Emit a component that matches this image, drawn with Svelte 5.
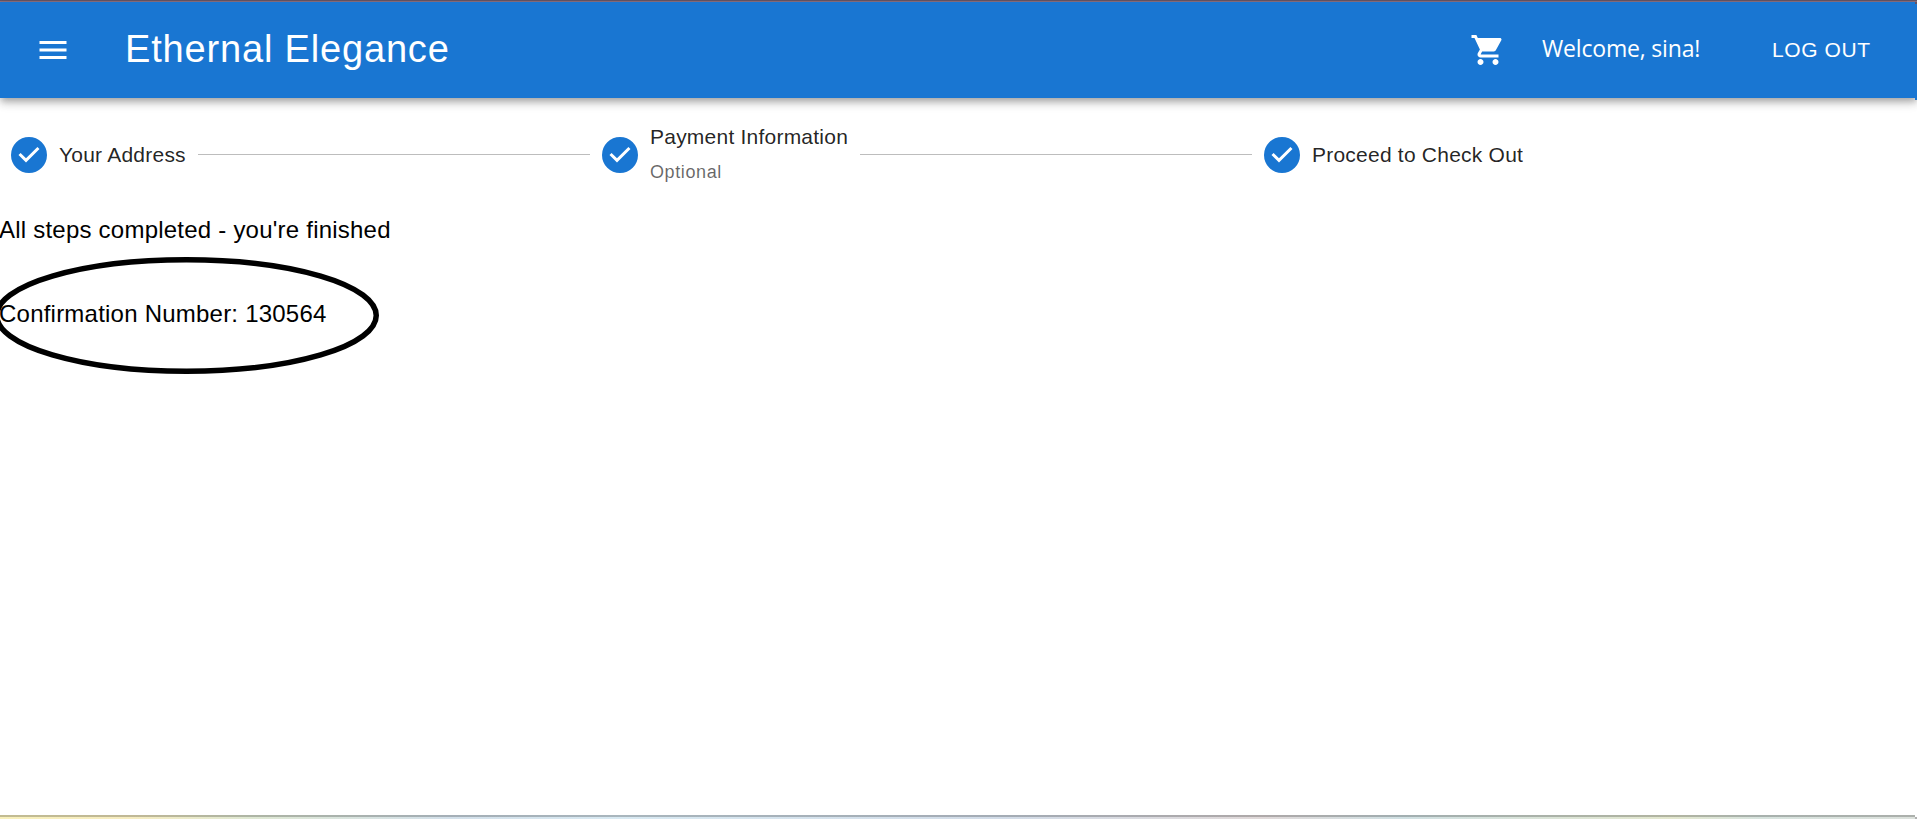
<script>
  const steps = [
    { label: 'Your Address', width: 127 },
    { label: 'Payment Information', optional: 'Optional', width: 198 },
    { label: 'Proceed to Check Out', width: 212 }
  ];
</script>

<div class="page">
  <div class="window-edge"></div>
  <header>
    <svg class="menu" viewBox="0 0 24 24"><path d="M3 18h18v-2H3v2zm0-5h18v-2H3v2zm0-7v2h18V6H3z" /></svg>
    <h1>Ethernal Elegance</h1>
    <svg class="cart" viewBox="0 0 24 24"><path d="M7 18c-1.1 0-1.99.9-1.99 2S5.900 22 7 22s2-.9 2-2-.9-2-2-2zM1 2v2h2l3.600 7.590-1.350 2.450c-.16.28-.25.61-.25.960 0 1.100.9 2 2 2h12v-2H7.420c-.14 0-.25-.11-.25-.25l.03-.12.9-1.630h7.450c.75 0 1.410-.41 1.750-1.030l3.580-6.490c.08-.14.12-.31.12-.48 0-.55-.45-1-1-1H5.210l-.94-2H1zm16 16c-1.100 0-1.990.9-1.990 2s.89 2 1.990 2 2-.9 2-2-.9-2-2-2z" /></svg>
    <span class="welcome">Welcome, sina!</span>
    <span class="logout">LOG OUT</span>
    <i class="corner"></i>
  </header>

  <main>
    <div class="stepper">
      {#each steps as step, i}
        {#if i > 0}<div class="connector"></div>{/if}
        <div class="step">
          <svg viewBox="0 0 24 24"><path d="M12 0a12 12 0 1 0 0 24 12 12 0 0 0 0-24zm-2 17l-5-5 1.400-1.400 3.600 3.600 7.600-7.600L19 8l-9 9z" /></svg>
          <div class="label" style="width: {step.width}px">
            <span class="name">{step.label}</span>
            {#if step.optional}<span class="optional">{step.optional}</span>{/if}
          </div>
        </div>
      {/each}
    </div>
    <p>All steps completed - you're finished</p>
    <div class="confirmation">
      <p>Confirmation Number: 130564</p>
      <svg class="ring" viewBox="0 0 385 117"><ellipse cx="192.500" cy="58.500" rx="189.750" ry="55.750" /></svg>
    </div>
  </main>
  <footer></footer>
</div>

<style>
  :global(body) { margin: 0; background: #fff; overflow: hidden; }
  .page {
    height: 819px;
    display: flex;
    flex-direction: column;
    overflow: hidden;
    font-family: "Liberation Sans", Arial, sans-serif;
    background: #fff;
  }
  .window-edge {
    flex: none;
    height: 2px;
    box-sizing: border-box;
    background: #645464;
    border-bottom: 1px solid #8a7080;
  }
  header {
    position: relative;
    flex: none;
    height: 96px;
    box-sizing: border-box;
    padding: 0 46px 0 35px;
    display: flex;
    align-items: center;
    color: #fff;
    background: #1976d2;
    box-shadow: 0 3px 6px -1.500px rgba(0,0,0,.2), 0 6px 7.500px rgba(0,0,0,.14), 0 1.500px 15px rgba(0,0,0,.12);
  }
  header svg { width: 36px; height: 36px; fill: currentColor; }
  h1 {
    margin: 0 auto 2px 54px;
    font-size: 38px;
    font-weight: 400;
    line-height: 60px;
    letter-spacing: .83px;
    white-space: nowrap;
  }
  .welcome {
    width: 160px;
    margin: 0 70px 4px 36px;
    font: 23px/36px "Open Sans", "Noto Sans", sans-serif;
    letter-spacing: -.18px;
    white-space: nowrap;
  }
  .logout { width: 99px; margin-bottom: 2px; font-size: 21px; line-height: 37px; letter-spacing: .6px; white-space: nowrap; }
  .corner {
    position: absolute;
    right: 0;
    top: 0;
    width: 2px;
    height: 96px;
    border-top: 2px solid #645464;
    background: #1976d2;
  }
  main { flex: 1; padding-top: 21px; }
  .stepper { width: 1535px; height: 72px; display: flex; align-items: center; padding-left: 11px; box-sizing: border-box; }
  .step { display: flex; align-items: center; gap: 12px; flex: none; }
  .step svg { width: 36px; height: 36px; fill: #1976d2; }
  .label { display: flex; flex-direction: column; white-space: nowrap; color: rgba(0,0,0,.87); }
  .name { font-size: 21px; line-height: 30px; letter-spacing: .225px; }
  .optional { font-size: 18px; line-height: 30px; margin: 5px 0 1px; letter-spacing: .6px; color: rgba(0,0,0,.6); }
  .connector { width: 392px; height: 1px; margin: 0 12px 1px; background: #bdbdbd; flex: none; }
  p { margin: 0 0 0 -1px; font-size: 24px; line-height: 36px; letter-spacing: .225px; color: #000; }
  .stepper + p { margin-top: 21px; margin-bottom: 48px; }
  .confirmation { position: relative; }
  .ring { position: absolute; left: -6px; top: -39px; width: 385px; height: 117px; }
  .ring ellipse { fill: none; stroke: #000; stroke-width: 5.500; }
  footer {
    flex: none;
    height: 4px;
    margin-right: 2px;
    box-shadow: 2px 2px #b0b0b0;
    background:
      linear-gradient(rgba(0,0,0,.22) 2px, transparent 2px),
      linear-gradient(90deg, #f8f0bb 0, #f6ecc0 130px, #dfe8d3 250px, #d3e0ea 450px, #d8e9f2 620px, #d2dce8 1000px, #e0d9d9 1260px, #d0e0e3 1400px, #e3e7ce 1670px, #d7e3de 1760px, #dce1dc);
  }
</style>
